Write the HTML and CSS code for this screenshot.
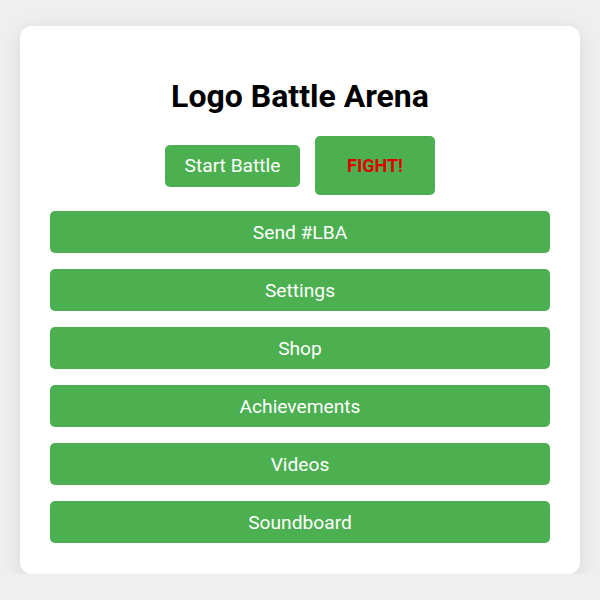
FILE: index.html
```html
<!DOCTYPE html>
<html>
<head>
<meta charset="utf-8">
<link rel="stylesheet" href="styles.css">
</head>
<body>
<div class="card">
  <h1 class="title">Logo Battle Arena</h1>
  <div class="top-row">
    <button class="btn btn-start">Start Battle</button>
    <button class="btn btn-fight">FIGHT!</button>
  </div>
  <div class="menu">
    <button class="btn btn-wide">Send #LBA</button>
    <button class="btn btn-wide">Settings</button>
    <button class="btn btn-wide">Shop</button>
    <button class="btn btn-wide">Achievements</button>
    <button class="btn btn-wide">Videos</button>
    <button class="btn btn-wide">Soundboard</button>
  </div>
</div>
</body>
</html>
```

FILE: styles.css
```css
html, body {
  margin: 0;
  padding: 0;
}
body {
  background: #efefef;
  font-family: Roboto, "Liberation Sans", sans-serif;
  padding-top: 26px;
}
.card {
  width: 500px;
  margin: 0 auto;
  background: #ffffff;
  border-radius: 12px;
  padding: 0 30px 31px;
  box-shadow: 0 4px 20px rgba(0, 0, 0, 0.1);
  overflow: hidden;
}
.title {
  font-size: 32px;
  font-weight: 700;
  text-align: center;
  color: #000;
  margin: 51.5px 0 21.5px;
  line-height: 37px;
}
.top-row {
  display: flex;
  justify-content: center;
  align-items: center;
  gap: 15px;
  margin-bottom: 16px;
}
.btn {
  background: #4caf50;
  color: #ffffff;
  border: none;
  border-radius: 5px;
  font-family: Roboto, "Liberation Sans", sans-serif;
  cursor: pointer;
  padding: 0;
}
.btn-start {
  font-size: 19.2px;
  width: 135px;
  height: 42px;
}
.btn-fight {
  font-size: 18px;
  font-weight: 700;
  color: #e00000;
  width: 120px;
  height: 59px;
}
.menu {
  display: flex;
  flex-direction: column;
  gap: 16px;
}
.btn-wide {
  width: 100%;
  height: 42px;
  font-size: 19.2px;
}
```
